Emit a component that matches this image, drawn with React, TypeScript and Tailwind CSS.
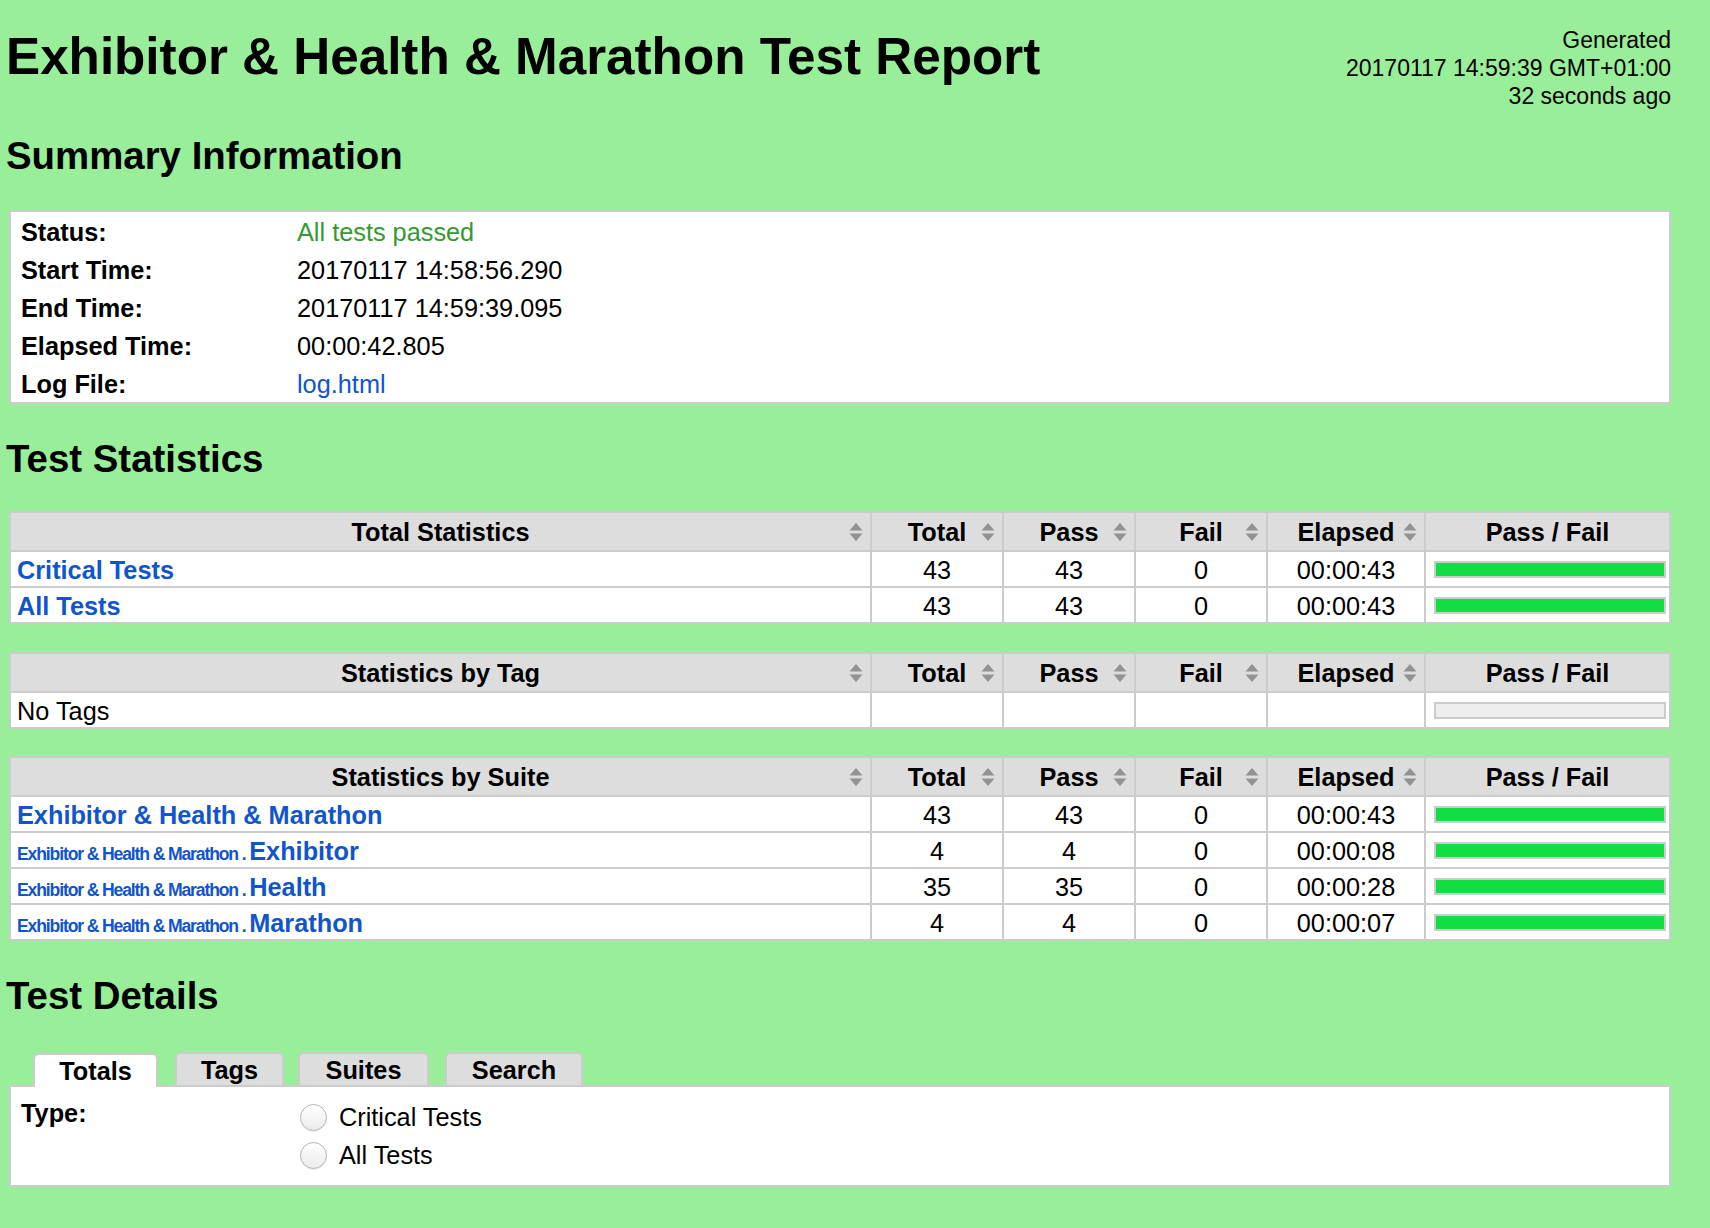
import React from "react";

const link = "text-[#1155cc]";
const cols =
  "grid grid-cols-[859px_130px_130px_130px_156px_243px] gap-[2px] bg-[#cccccc] p-[2px]";

type Row = {
  name: React.ReactNode;
  total: string;
  pass: string;
  fail: string;
  elapsed: string;
  ratio: number | null;
};

function SortIcon() {
  return (
    <svg
      width="14"
      height="18"
      viewBox="0 0 14 18"
      className="absolute right-[7px] top-1/2 -translate-y-1/2"
    >
      <path d="M7 0 L13.5 7.5 L0.5 7.5 Z" fill="#929292" />
      <path d="M0.5 10.5 L13.5 10.5 L7 18 Z" fill="#929292" />
    </svg>
  );
}

function Bar({ ratio }: { ratio: number | null }) {
  return (
    <div className="ml-[8px] mr-[3px] h-[17px] w-full border-2 border-[#cccccc] bg-[#eeeeee]">
      {ratio !== null && (
        <div className="h-full bg-[#11dd44]" style={{ width: `${ratio * 100}%` }} />
      )}
    </div>
  );
}

function StatTable({ title, rows }: { title: string; rows: Row[] }) {
  const head = "relative flex h-[37px] items-center justify-center bg-[#dddddd] pt-[3px] font-bold";
  const cell = "flex h-[34px] items-center justify-center bg-white pt-[3px]";
  return (
    <div className={cols}>
      <div className={head}>
        {title}
        <SortIcon />
      </div>
      <div className={head}>
        Total
        <SortIcon />
      </div>
      <div className={head}>
        Pass
        <SortIcon />
      </div>
      <div className={head}>
        Fail
        <SortIcon />
      </div>
      <div className={head}>
        Elapsed
        <SortIcon />
      </div>
      <div className={head}>Pass / Fail</div>
      {rows.map((r, i) => (
        <React.Fragment key={i}>
          <div className="flex h-[34px] items-center bg-white pl-[6px] pt-[3px]">{r.name}</div>
          <div className={cell}>{r.total}</div>
          <div className={cell}>{r.pass}</div>
          <div className={cell}>{r.fail}</div>
          <div className={cell}>{r.elapsed}</div>
          <div className="flex h-[34px] items-center bg-white">
            <Bar ratio={r.ratio} />
          </div>
        </React.Fragment>
      ))}
    </div>
  );
}

function SuiteName({ name }: { name: string }) {
  return (
    <span className={`${link} font-bold`}>
      <span className="text-[17.6px] tracking-[-0.065em]">Exhibitor &amp; Health &amp; Marathon . </span>
      {name}
    </span>
  );
}

const totalRows: Row[] = [
  {
    name: <span className={`${link} font-bold`}>Critical Tests</span>,
    total: "43",
    pass: "43",
    fail: "0",
    elapsed: "00:00:43",
    ratio: 1,
  },
  {
    name: <span className={`${link} font-bold`}>All Tests</span>,
    total: "43",
    pass: "43",
    fail: "0",
    elapsed: "00:00:43",
    ratio: 1,
  },
];

const tagRows: Row[] = [
  { name: "No Tags", total: "", pass: "", fail: "", elapsed: "", ratio: null },
];

const suiteRows: Row[] = [
  {
    name: <span className={`${link} font-bold`}>Exhibitor &amp; Health &amp; Marathon</span>,
    total: "43",
    pass: "43",
    fail: "0",
    elapsed: "00:00:43",
    ratio: 1,
  },
  { name: <SuiteName name="Exhibitor" />, total: "4", pass: "4", fail: "0", elapsed: "00:00:08", ratio: 1 },
  { name: <SuiteName name="Health" />, total: "35", pass: "35", fail: "0", elapsed: "00:00:28", ratio: 1 },
  { name: <SuiteName name="Marathon" />, total: "4", pass: "4", fail: "0", elapsed: "00:00:07", ratio: 1 },
];

const summary: [string, React.ReactNode][] = [
  ["Status:", <span className="text-[#339933]">All tests passed</span>],
  ["Start Time:", "20170117 14:58:56.290"],
  ["End Time:", "20170117 14:59:39.095"],
  ["Elapsed Time:", "00:00:42.805"],
  ["Log File:", <span className={link}>log.html</span>],
];

function Radio({ label }: { label: string }) {
  return (
    <label className="flex h-[38px] items-center">
      <span className="h-[27px] w-[27px] rounded-full border border-[#b4b4b4] bg-gradient-to-b from-white to-[#ebebeb] shadow-[0_1px_1px_rgba(0,0,0,0.08)]" />
      <span className="ml-[12px] pt-[2px]">{label}</span>
    </label>
  );
}

export default function App() {
  return (
    <div className="min-h-screen bg-[#99ee99] font-['Liberation_Sans',Arial,sans-serif] text-[25.3px] text-black">
      <div className="w-[1671px] pl-[6px]">
        <div className="flex h-[109px] items-start justify-between">
          <h1 className="mt-[28px] text-[51.2px] font-bold leading-[57px]">
            Exhibitor &amp; Health &amp; Marathon Test Report
          </h1>
          <div className="mt-[26px] text-right text-[23px] leading-[28px]">
            <div>Generated</div>
            <div>20170117 14:59:39 GMT+01:00</div>
            <div>32 seconds ago</div>
          </div>
        </div>

        <h2 className="mt-[27px] text-[38.4px] font-bold leading-[40px]">Summary Information</h2>
        <div className="ml-[3px] mt-[34px] border-2 border-[#cccccc] bg-white">
          {summary.map(([k, v]) => (
            <div key={k} className="flex h-[38px] items-center pt-[3px]">
              <div className="w-[286px] pl-[10px] font-bold">{k}</div>
              <div>{v}</div>
            </div>
          ))}
        </div>

        <h2 className="mt-[35px] text-[38.4px] font-bold leading-[40px]">Test Statistics</h2>
        <div className="ml-[3px]">
          <div className="mt-[32px]">
            <StatTable title="Total Statistics" rows={totalRows} />
          </div>
          <div className="mt-[28px]">
            <StatTable title="Statistics by Tag" rows={tagRows} />
          </div>
          <div className="mt-[27px]">
            <StatTable title="Statistics by Suite" rows={suiteRows} />
          </div>
        </div>

        <h2 className="mt-[35px] text-[38.4px] font-bold leading-[40px]">Test Details</h2>
        <div className="ml-[3px] mt-[36px]">
          <div className="flex items-end pl-[24px] font-bold">
            <div className="relative z-10 -mb-[2px] flex h-[34px] w-[125px] items-center justify-center rounded-t-[6px] border-2 border-b-0 border-[#cccccc] bg-white pt-[2px]">
              Totals
            </div>
            <div className="ml-[17px] flex h-[33px] w-[109px] items-center justify-center rounded-t-[6px] border-2 border-b-0 border-[#cccccc] bg-[#dddddd] pt-[2px]">
              Tags
            </div>
            <div className="ml-[14px] flex h-[33px] w-[131px] items-center justify-center rounded-t-[6px] border-2 border-b-0 border-[#cccccc] bg-[#dddddd] pt-[2px]">
              Suites
            </div>
            <div className="ml-[16px] flex h-[33px] w-[138px] items-center justify-center rounded-t-[6px] border-2 border-b-0 border-[#cccccc] bg-[#dddddd] pt-[2px]">
              Search
            </div>
          </div>
          <div className="flex border-2 border-[#cccccc] bg-white pb-[11px] pt-[11px]">
            <div className="w-[289px] pl-[10px] pt-[1px] font-bold leading-[29px]">Type:</div>
            <div>
              <Radio label="Critical Tests" />
              <Radio label="All Tests" />
            </div>
          </div>
        </div>
      </div>
    </div>
  );
}
